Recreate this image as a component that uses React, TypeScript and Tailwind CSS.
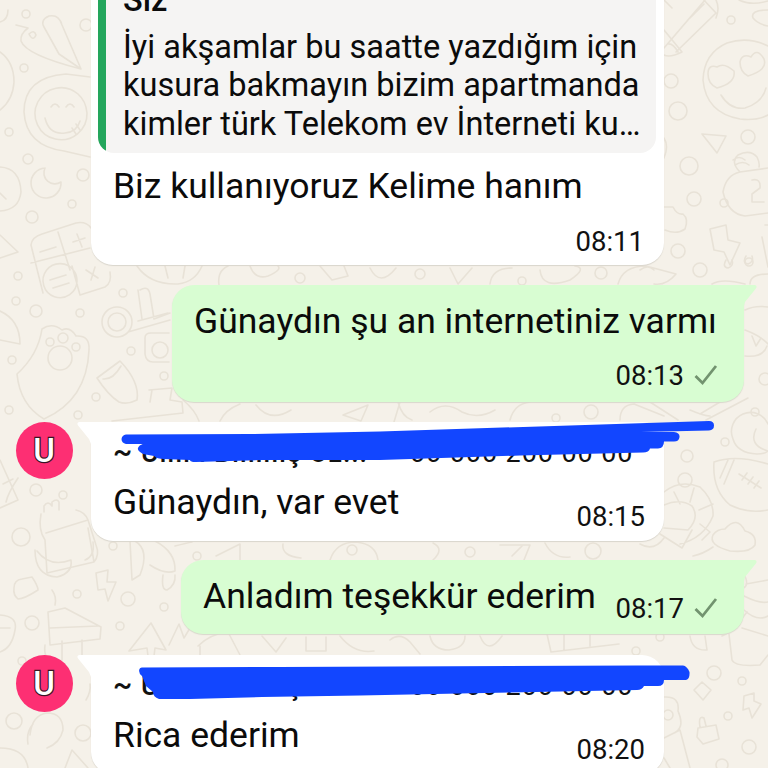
import type { ReactNode } from 'react'

const doodleDots = [
  [26, 14, 4], [24, 68, 4], [9, 132, 4], [28, 159, 5], [83, 175, 6], [72, 204, 4], [32, 217, 6], [86, 25, 6],
  [18, 276, 4], [16, 301, 4], [36, 311, 6], [80, 313, 4], [123, 293, 4], [12, 360, 4], [9, 410, 4], [131, 351, 4],
  [164, 376, 4], [96, 397, 4], [78, 415, 4], [36, 490, 6], [63, 495, 4], [21, 537, 9], [113, 546, 4], [77, 594, 4],
  [128, 599, 7], [164, 607, 4], [120, 626, 4], [32, 623, 7], [197, 556, 4], [14, 721, 8], [83, 733, 8], [22, 661, 4],
  [731, 20, 4], [671, 81, 7], [678, 111, 9], [748, 137, 7], [689, 166, 9], [694, 199, 7], [724, 203, 4], [678, 251, 7],
  [749, 262, 4], [700, 270, 7], [601, 273, 6], [522, 281, 4], [591, 412, 7], [556, 418, 4], [755, 412, 4], [725, 442, 4],
  [687, 456, 6], [765, 379, 6], [593, 551, 8], [660, 637, 4], [636, 651, 4], [714, 673, 7], [742, 681, 4], [728, 716, 4],
  [749, 747, 7], [722, 765, 6], [668, 715, 5], [685, 480, 7], [300, 278, 5], [420, 274, 5], [352, 550, 5], [470, 552, 5],
]

const doodlePaths = [
  // left side
  'M16 25 L28 28 Q20 34 21 41 Q26 55 81 69 L62 25 Q59 14 49 16 Q40 20 44 27 L59 54 L81 69 M29 34 q5 -5 7 1 q-3 7 -7 -1',
  'M0 52 Q14 62 14 82 Q13 100 0 110 M8 10 Q8 20 0 22',
  'M90 77 L66 74 Q24 77 24 112 Q26 146 64 151 L90 157',
  'M87 113 a26 26 0 1 1 -9 -19 Q86 101 87 113 M45 118 q4 17 20 15 q12 -1 15 -12 M51 107 q4 -6 8 0 M66 107 q4 -6 8 0 M72 128 l4 6 M76 124 l4 6',
  'M45 168 a15 15 0 1 0 16 14 a11 11 0 0 1 -16 -14',
  'M0 167 Q20 168 21 192 Q19 210 0 211 M0 193 l6 6 M0 235 L18 252 L0 258',
  'M31 245 Q32 237 42 234 L76 223 Q86 221 91 228 M31 245 L43 293 M58 232 L70 270 M31 263 L90 248 M40 252 l16 -5 M73 242 l12 -4 M77 234 l5 13',
  'M77 281 a17 17 0 1 1 -3 -10 Q77 275 77 281 M80 295 L105 287 Q112 283 110 272 M50 280 l16 -5 M53 288 l16 -5 M86 270 l12 8 M95 267 l-4 13 M72 266 l8 29',
  'M137 266 Q150 285 178 284 Q195 282 202 266 M165 266 l3 12 M185 266 l-2 12 M219 285 Q217 271 228 266',
  'M102 322 a15 15 0 1 0 30 0 a15 15 0 1 0 -30 0 M108 322 a9 9 0 1 0 18 0 a9 9 0 1 0 -18 0 M140 290 q8 -5 10 4 l4 25 l16 -6 M138 321 l30 -8 M128 332 l42 -12 M142 319 l-4 -29',
  'M145 338 q0 -5 6 -5 h18 M145 338 v16 q1 8 8 8 h16 M152 350 a8 8 0 1 0 16 0 a8 8 0 1 0 -16 0',
  'M0 311 Q20 320 20 344 L0 340',
  'M48 358 a12 12 0 1 0 24 0 a12 12 0 1 0 -24 0 M42 329 Q38 355 17 374 Q20 405 44 419 Q87 400 89 350 Q90 335 76 336 Q70 326 62 330 Q52 322 42 329 M58 338 a5 5 0 1 0 10 0 a5 5 0 1 0 -10 0 M46 342 a4 4 0 1 0 8 0 a4 4 0 1 0 -8 0 M72 347 a4 4 0 1 0 8 0 a4 4 0 1 0 -8 0',
  'M97 378 L120 361 Q140 382 137 400 Q127 405 119 402 Q108 395 97 378 M103 379 q10 1 18 -13',
  'M149 390 L172 388 L170 400 L182 402 L183 413 L112 421 M152 390 L150 402 M183 400 Q195 410 199 421 M240 404 Q225 410 220 421',
  'M0 460 L18 500 L0 508 M3 484 l10 -5 M18 478 q-10 15 -12 24 M44 512 v-6 q4 -6 8 0 v-4 q5 -4 7 0 v8',
  'M41 514 Q38 530 45 540 L47 573 L94 562 Q100 555 96 545 L88 520 L46 533 M88 520 Q85 512 76 510 M94 562 L88 528',
  'M35 550 Q35 576 57 577 Q73 573 71 560 Q50 568 37 551 M14 588 q0 -8 8 -9 l10 -2 q6 9 6 13 q-14 9 -20 9 q-5 -4 -4 -11',
  'M96 573 L108 570 L107 582 L116 582 L108 601 L105 589 L98 590 Z',
  'M52 590 q5 7 3 15 M48 612 L65 608 L101 627 L100 639 L50 645 Z M50 628 L98 626 M62 641 V660 M82 640 V660 M45 645 Q43 660 55 664',
  'M0 615 Q18 616 15 630 Q12 648 0 652 M0 628 h10',
  'M28 744 q-2 -12 5 -20 M30 735 q2 -20 17 -22 q16 0 16 17 q-3 13 -16 18 M0 748 Q25 748 28 768 M65 768 L72 750 L88 768',
  'M130 541 L132 580 L140 575 Q150 550 135 541 M155 541 Q176 552 175 571 Q165 575 150 565 M163 575 q-2 15 4 15 q9 -5 8 -15 M175 546 q12 -3 17 -4',
  'M129 651 L151 623 L166 650 L155 648 L154 656 L148 656 L147 648 Z M169 645 L179 624 L184 638 L190 628 M216 556 L240 544 V560 M198 646 Q210 634 228 632 L240 655 M200 655 V646',
  'M85 560 q10 -4 8 -18 M86 700 q5 -8 4 -16',
  // strips between bubbles
  'M250 266 q5 14 18 10 q14 -6 10 -10 M320 266 l12 14 l16 -4 l-4 -10 M370 268 q10 20 26 0 M450 268 l8 16 l14 -16 M490 284 q2 -16 22 -16',
  'M256 405 q14 18 35 5 M343 415 l25 -10 l-7 16 Z M400 402 l-6 20 M398 402 q4 15 14 18 M430 412 q15 -12 32 0 q16 8 33 -2 M510 420 q4 -16 20 -18',
  'M283 544 q-2 12 18 14 M330 560 q6 -18 26 -18 q20 2 22 18 M433 543 q12 6 0 17 M500 545 h30 l-6 15 M545 543 q8 16 25 14',
  'M262 636 l14 16 l10 -14 M306 637 v14 h20 v-14 M340 636 q14 18 34 15 M390 640 q10 -8 20 2 l10 12 M430 636 q3 14 19 14 q16 -2 16 -14 M480 636 q8 20 22 0 M547 634 l4 18 l68 -8 M564 634 v16 M590 634 v12',
  'M540 270 q2 20 30 10 q18 -12 5 -14 M618 284 q5 -18 28 -18 l30 8 q-10 12 -22 10 M640 270 q8 -6 14 0',
  // right side
  'M664 0 L672 8 M664 48 L705 0 M676 52 L716 13 L702 -2 M664 30 l18 22 q-12 6 -18 3 M668 44 q5 -1 10 8 M716 18 q4 -10 0 -18 M690 18 l14 -14',
  'M768 46 Q748 36 727 43 Q704 53 703 80 Q706 113 740 119 Q757 121 768 115 M721 95 Q730 110 745 108 Q762 103 766 88',
  'M708 74 Q708 64 717 67 Q724 62 734 71 Q736 83 717 88 Q708 84 708 74 M740 62 Q742 53 751 57 Q757 47 764 59 Q768 70 748 76 Q740 72 740 62',
  'M739 0 q12 6 29 1 M768 10 q-18 0 -15 8 q5 6 15 8',
  'M702 134 L726 136 L717 153 Z M664 138 q5 8 0 20',
  'M740 172 q-10 -10 -2 -17 q12 -6 19 2 q3 6 2 10 M740 172 Q726 175 723 192 Q728 214 745 216 L768 213 M740 172 L768 168 M752 180 q9 -2 8 8 l-8 6 v8 h12 M733 160 q6 -5 12 0 M735 165 q8 -5 14 0',
  'M664 207 h9 q4 8 10 7 q6 5 2 15 q-8 6 -20 1',
  'M710 229 L726 225 L728 240 L740 243 L730 265 L724 252 L714 250 Z M762 237 l6 30 M765 225 h3',
  'M726 260 q-4 7 2 8 q6 -2 4 -8 M746 256 q-4 7 2 8 q6 -2 4 -8 M768 274 q-18 0 -18 10 M712 284 q10 -6 33 0',
  'M745 310 q10 -5 23 -3 M745 330 q16 6 23 14 M745 356 q18 2 22 -10 M752 336 l4 10 l5 -8 M620 420 q0 -15 14 -16 l30 12 M650 402 l28 18 M700 414 L740 390 M706 420 L748 398 M690 410 q14 6 20 6',
  'M768 424 a17 17 0 0 0 -35 15 q4 14 24 15 q8 0 11 -3 q-20 -6 -12 -22',
  'M714 462 Q735 454 768 464 M714 462 Q712 490 730 505 Q748 514 768 510 M724 484 L734 460 M720 478 L728 460 M739 474 l22 14 M742 480 l5 -7 M748 484 l5 -7 M754 488 l5 -7',
  'M664 492 Q680 479 700 487 Q714 500 713 516 Q704 538 680 544 M674 492 l6 12 M694 488 l-4 14 M713 504 l-14 6 M664 505 Q680 498 692 506 Q700 518 688 530 L664 528 M660 534 l22 14 l10 -18 M640 544 q14 8 24 -6 M700 524 l10 8 l-8 8',
  'M730 551 q-22 -6 -17 -16 q4 -6 12 -6 q12 -14 20 2 q12 3 10 14 q-5 8 -25 6',
  'M745 576 q6 15 -10 12 M744 596 Q760 604 768 602 M744 610 Q757 622 768 616 M746 584 L768 580 M690 636 q2 15 17 14 l-2 -14 M693 556 q10 -2 20 -9',
  'M729 634 L732 660 Q735 667 760 665 L768 655 M722 636 q10 -4 25 -24 M742 628 l26 8',
  'M694 690 l8 -8 l9 8 l-8 10 Z M744 696 l10 -3 v8 l7 3 l-9 14 l-3 -10 l-6 2 Z M698 728 l18 -3 l3 14 l-16 5 l-6 -7 Z M700 727 q-2 -12 4 -9 l2 8',
  'M664 697 q16 -1 14 14 q8 18 -6 23 M664 738 l16 -8 l10 38 M664 758 l6 10 M512 556 l10 -10',
]

const Wallpaper = () => (
  <svg
    className="absolute inset-0 h-full w-full"
    viewBox="0 0 768 768"
    fill="none"
    stroke="#e8e2d7"
    strokeWidth="1.6"
    strokeLinecap="round"
    strokeLinejoin="round"
    aria-hidden="true"
  >
    {doodleDots.map(([cx, cy, r], i) => (
      <circle key={i} cx={cx} cy={cy} r={r} />
    ))}
    {doodlePaths.map((d) => (
      <path key={d} d={d} />
    ))}
  </svg>
)

const Avatar = () => (
  <div className="flex h-[57px] w-[57px] shrink-0 items-center justify-center rounded-full bg-[#fd2f73]">
    <svg width="57" height="57" viewBox="0 0 57 57" aria-label="U">
      <text
        x="28"
        y="40"
        textAnchor="middle"
        fill="#fff"
        stroke="#3a1524"
        strokeWidth="2.4"
        paintOrder="stroke"
        className="font-[Roboto,sans-serif] text-[33px] font-medium"
      >
        U
      </text>
    </svg>
  </div>
)

const Tick = () => (
  <svg className="ml-[10px] mb-[6px] shrink-0" width="24" height="22" viewBox="0 0 24 22" fill="none">
    <path d="M1.5 12 L8.5 19 L22 2" stroke="#72936f" strokeWidth="2.8" />
  </svg>
)

const Time = ({ value, sent }: { value: string; sent?: boolean }) => (
  <div className="flex items-end">
    <span className="text-[27.5px] leading-[32px] text-[#111]">{value}</span>
    {sent && <Tick />}
  </div>
)

const Sent = ({ className, children }: { className: string; children: ReactNode }) => (
  <div className={`relative mr-6 flex self-end rounded-[22px] rounded-tr-none bg-[#d8fdd2] shadow-[0_1px_1px_#d9d8cc] ${className}`}>
    <svg className="absolute left-full top-0" width="14" height="21" viewBox="0 0 14 21">
      <path d="M-1 0 H11 Q14 1 11.5 4 L1 17 L0 21 H-1 Z" fill="#d8fdd2" />
    </svg>
    {children}
  </div>
)

const Received = ({ text, time, scribble }: { text: string; time: string; scribble: ReactNode }) => (
  <div className="flex">
    <div className="ml-4">
      <Avatar />
    </div>
    <div className="relative ml-[18px] flex h-[119px] w-[573px] flex-col rounded-[22px] rounded-tl-none bg-white pl-[22px] shadow-[0_1px_1px_#d9d5cc]">
      <svg className="absolute right-full top-0" width="14" height="22" viewBox="0 0 14 22">
        <path d="M15 0 H2 Q-1 1 1.5 4 L12 17 L14 22 H15 Z" fill="#fff" />
      </svg>
      <div className="mt-[13px] flex h-[36px] items-center whitespace-nowrap text-[#111]">
        <span className="w-[28px] text-[29px] font-medium">~</span>
        <span className="w-[232px] text-[27px] font-medium tracking-[0.8px]">Uıııııı Bııııııış Oz...</span>
        <span className="ml-[37px] text-[27px] tracking-[0.9px]">00 000 200 00 00</span>
      </div>
      <div className="flex justify-between pr-[19px]">
        <p className="mt-[9px] text-[35.5px] leading-[44px]">{text}</p>
        <div className="mt-[30px]">
          <Time value={time} />
        </div>
      </div>
      {scribble}
    </div>
  </div>
)

export default function App() {
  return (
    <main className="relative h-[768px] w-[768px] overflow-hidden bg-[#f5f1e9] font-[Roboto,sans-serif] text-[#0b0b0b]">
      <Wallpaper />
      <div className="relative flex h-[768px] flex-col">
        <div className="-mt-[40px] ml-[91px] flex h-[305px] w-[573px] shrink-0 flex-col rounded-[22px] bg-white px-[7px] shadow-[0_1px_1px_#d9d5cc]">
          <div className="flex h-[193px] w-[558px] shrink-0 overflow-hidden rounded-[16px] bg-[#f5f4f3]">
            <div className="w-[8px] bg-[#24a65c]" />
            <div className="pl-[17px] pt-[21px] text-[32.5px] leading-[38.5px] tracking-[0.02px] whitespace-nowrap">
              <p className="font-medium">Siz</p>
              <p className="mt-[8px]">İyi akşamlar bu saatte yazdığım için</p>
              <p>kusura bakmayın bizim apartmanda</p>
              <p>kimler türk Telekom ev İnterneti ku…</p>
            </div>
          </div>
          <p className="mt-[11px] pl-[15px] text-[35.5px] leading-[44px]">Biz kullanıyoruz Kelime hanım</p>
          <div className="mt-[18px] mr-[13px] self-end">
            <Time value="08:11" />
          </div>
        </div>

        <Sent className="mt-[20px] h-[117px] w-[572px] shrink-0 flex-col pl-[22px]">
          <p className="mt-[14px] text-[35.5px] leading-[44px] whitespace-nowrap">Günaydın şu an internetiniz varmı</p>
          <div className="mt-[17px] mr-[26px] self-end">
            <Time value="08:13" sent />
          </div>
        </Sent>

        <div className="mt-[20px] h-[119px] shrink-0">
          <Received
            text="Günaydın, var evet"
            time="08:15"
            scribble={
              <svg className="absolute left-0 top-0 overflow-visible" width="573" height="119" viewBox="91 422 573 119">
                <path
                  d="M126 434.5 L250 434 L380 431.5 L709 421 Q714 421 714 425.5 Q714 430 709 430.5 L641 432 H674 Q680 433 679.5 437 Q679 441.5 674 441.5 H664 Q664 448 658 448.5 H650 Q649 452.5 643 452.5 L520 455.5 L380 460 L262 460 L196 462 Q190 462 190 460 L164 459 Q157 459 154 456 L143 454 Q137 451 138 448 Q139 445 143 444 H126 Q121.5 443 121.5 439 Q122 435 126 434.5 Z"
                  fill="#1246ff"
                />
              </svg>
            }
          />
        </div>

        <Sent className="mt-[19px] h-[74px] w-[563px] shrink-0 pl-[22px]">
          <p className="mt-[14px] text-[35.5px] leading-[44px] whitespace-nowrap">Anladım teşekkür ederim</p>
          <div className="mt-[33px] mr-[26px] ml-auto">
            <Time value="08:17" sent />
          </div>
        </Sent>

        <div className="mt-[21px] shrink-0">
          <Received
            text="Rica ederim"
            time="08:20"
            scribble={
              <svg className="absolute left-0 top-0 overflow-visible" width="573" height="119" viewBox="91 655 573 119">
                <path
                  d="M143 667.5 L280 667 L638 665.5 L683 665.5 Q687 666 689.5 672 Q690 679 686 680 H664 Q664 686 658 686 H644 Q642 690 637 690 L510 692.5 L360 695.5 L262 697 L190 699 H159 Q153 697 153 692 L146 686 L142 676 Q138 673 139.5 669 Q140 667 143 667.5 Z"
                  fill="#1246ff"
                />
              </svg>
            }
          />
        </div>
      </div>
    </main>
  )
}
